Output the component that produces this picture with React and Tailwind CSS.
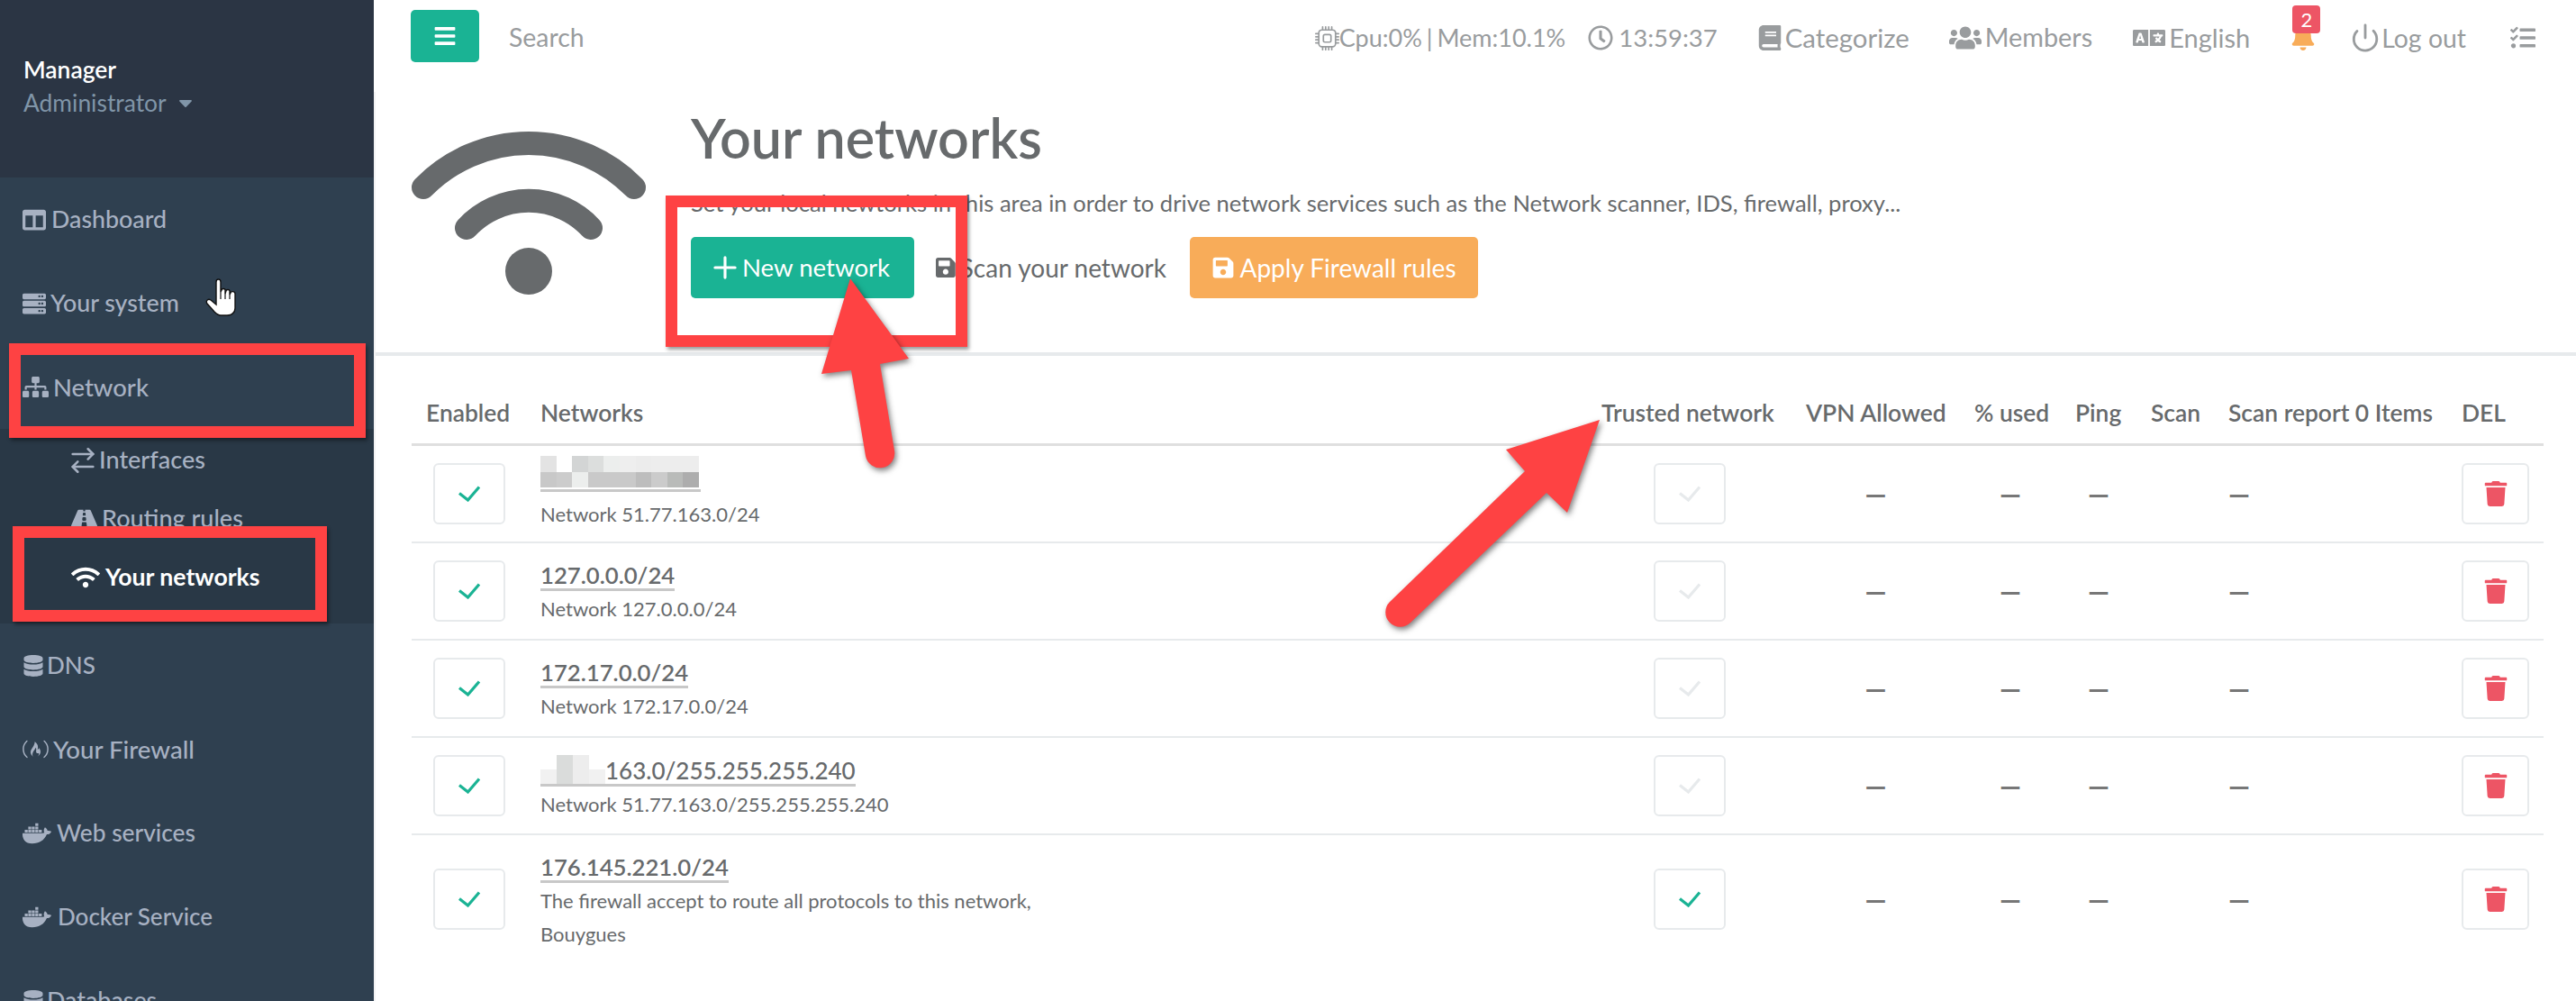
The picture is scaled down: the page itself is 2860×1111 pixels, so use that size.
import React from "react";
import { FaBars, FaBell, FaBook, FaCaretDown, FaColumns, FaDatabase, FaDocker, FaFreeCodeCamp, FaLanguage, FaRegClock, FaRoad, FaSave, FaServer, FaSitemap, FaTasks, FaTrash, FaUsers, FaWifi } from "react-icons/fa";
import { BsCpu } from "react-icons/bs";
import { ArrowRightLeft, Plus, Power } from "lucide-react";

const topItems = [
  { icon: <FaRegClock className="text-[28px]" />, label: "13:59:37", cls: "ml-[25px] gap-[6px] text-[27.5px]" },
  { icon: <FaBook className="text-[28px]" />, label: "Categorize", cls: "ml-[44px] gap-[3px] text-[29.4px]" },
  { icon: <FaUsers className="text-[36px]" />, label: "Members", cls: "ml-[44px] gap-[4px] text-[28.8px]" },
  { icon: <FaLanguage className="text-[36px]" />, label: "English", cls: "ml-[45px] gap-[4px] text-[29px]" },
];

const networks = [
  { name: "blur1", desc: ["Network 51.77.163.0/24"], h: "h-[108px]" },
  { name: "127.0.0.0/24", desc: ["Network 127.0.0.0/24"], h: "h-[108px]" },
  { name: "172.17.0.0/24", desc: ["Network 172.17.0.0/24"], h: "h-[108px]" },
  { name: "blur2", desc: ["Network 51.77.163.0/255.255.255.240"], h: "h-[108px]" },
  { name: "176.145.221.0/24", desc: ["The firewall accept to route all protocols to this network,", "Bouygues"], h: "h-[142px]", trusted: true, last: true },
];

const blurTop = ["bg-[#e3e3e3]", "bg-white", "bg-[#d3d5d5]", "bg-[#dcdedd]", "bg-[#eceeed]", "bg-[#eeeeee]", "bg-[#ececec]", "bg-[#ededed]", "bg-[#ededed]", "bg-[#ededed]"];
const blurBottom = ["bg-[#c8c8c8]", "bg-[#cccccc]", "bg-[#eceeed]", "bg-[#c9c9c9]", "bg-[#c9c9c9]", "bg-[#c9c9c9]", "bg-[#bdbdbd]", "bg-[#cbcbcb]", "bg-[#b9bbb9]", "bg-[#adadad]"];

function NavItem({ icon, label, textCls }) {
  return (
    <div className="h-[93px] flex items-center pl-[25px] text-[26.8px] text-[#a7b1c2] font-medium">
      {icon}
      <span className={textCls}>{label}</span>
    </div>
  );
}

function SubItem({ icon, label, textCls, active }) {
  return (
    <div className={`h-[65px] flex items-center pl-[79px] text-[27px] font-medium ${active ? "text-white" : "text-[#a7b1c2]"}`}>
      {icon}
      <span className={textCls}>{label}</span>
    </div>
  );
}

function Sidebar() {
  return (
    <aside className="w-[415px] h-[1111px] shrink-0 bg-[#2f4050] overflow-hidden">
      <div className="h-[197px] bg-[#2b3544] pl-[26px] pt-[58px]">
        <div className="text-[26.4px] leading-[38px] font-semibold text-white">Manager</div>
        <div className="text-[26.4px] leading-[36px] text-[#8095a8] flex items-center">
          Administrator
          <FaCaretDown className="ml-[9px] text-[24px]" />
        </div>
      </div>
      <NavItem icon={<FaColumns className="text-[26px]" />} label="Dashboard" textCls="ml-[6px]" />
      <NavItem icon={<FaServer className="text-[26px]" />} label="Your system" textCls="ml-[5px]" />
      <NavItem icon={<FaSitemap className="text-[29px]" />} label="Network" textCls="ml-[5px] text-[27.4px]" />
      <div className="bg-[#293846] h-[216px] pt-[2px]">
        <SubItem icon={<ArrowRightLeft className="w-[34px] h-[34px] -mx-[4px]" strokeWidth={1.8} />} label="Interfaces" textCls="ml-[5px]" />
        <SubItem icon={<FaRoad className="text-[29px]" />} label="Routing rules" textCls="ml-[5px]" />
        <SubItem icon={<FaWifi className="text-[32px]" />} label="Your networks" textCls="ml-[6px] font-bold text-[26.6px]" active />
      </div>
      <NavItem icon={<FaDatabase className="text-[24px]" />} label="DNS" textCls="ml-[3px] text-[26px]" />
      <NavItem icon={<FaFreeCodeCamp className="text-[29px]" />} label="Your Firewall" textCls="ml-[5px] text-[27.6px]" />
      <NavItem icon={<FaDocker className="text-[32px]" />} label="Web services" textCls="ml-[6px] text-[26.3px]" />
      <NavItem icon={<FaDocker className="text-[32px]" />} label="Docker Service" textCls="ml-[7px] text-[26px]" />
      <NavItem icon={<FaDatabase className="text-[24px]" />} label="Databases" textCls="ml-[3px]" />
    </aside>
  );
}

function TopBar() {
  return (
    <header className="h-[102px] flex items-start">
      <button className="ml-[41px] mt-[11px] w-[76px] h-[58px] rounded-[5px] bg-[#1ab394] text-white flex items-center justify-center">
        <FaBars className="text-[26px]" />
      </button>
      <span className="ml-[33px] mt-[21px] text-[28.4px] leading-[40px] text-[#999c9e]">Search</span>
      <div className="ml-auto pr-[45px] h-[84px] flex items-center text-[28.4px] text-[#999c9e]">
        <BsCpu className="text-[27px]" />
        <span className="text-[27px] [word-spacing:-2px]">Cpu:0% | Mem:10.1%</span>
        {topItems.map((item) => (
          <div key={item.label} className={`flex items-center ${item.cls}`}>
            {item.icon}
            <span>{item.label}</span>
          </div>
        ))}
        <div className="relative ml-[45px] text-[#f8ac59]">
          <FaBell className="text-[28px]" />
          <span className="absolute left-[2px] top-[-22px] w-[31px] h-[31px] rounded-[4px] bg-[#ed5565] text-white text-[22px] leading-[31px] text-center">2</span>
        </div>
        <div className="ml-[38px] flex items-center gap-[1px]">
          <Power className="w-[34px] h-[34px]" strokeWidth={2} />
          <span>Log out</span>
        </div>
        <FaTasks className="ml-[49px] text-[28px]" />
      </div>
    </header>
  );
}

function Hero() {
  return (
    <section className="h-[293px] border-b-4 border-[#e7eaec] flex items-start">
      <svg viewBox="0 0 260 182" className="w-[260px] h-[182px] ml-[40px] mt-[43px] text-[#676a6c]">
        <path d="M13 63 A164 164 0 0 1 247 63" fill="none" stroke="currentColor" strokeWidth="26" strokeLinecap="round" />
        <path d="M61 108 A94 94 0 0 1 199 108" fill="none" stroke="currentColor" strokeWidth="26" strokeLinecap="round" />
        <circle cx="130" cy="156" r="26" fill="currentColor" />
      </svg>
      <div className="ml-[50px] text-[#676a6c]">
        <h1 className="mt-[21px] text-[61px] leading-[60px] font-semibold">Your networks</h1>
        <p className="mt-[24px] text-[25.6px] leading-[36px]">Set your local newtorks in this area in order to drive network services such as the Network scanner, IDS, firewall, proxy...</p>
        <div className="mt-[20px] flex items-center text-[28px]">
          <button className="w-[248px] h-[68px] rounded-[5px] bg-[#1ab394] text-white text-[27.6px] flex items-center justify-center gap-[8px]">
            <Plus className="w-[38px] h-[38px] -mx-[8px]" strokeWidth={2} />
            New network
          </button>
          <button className="ml-[24px] w-[256px] flex items-center gap-[5px] whitespace-nowrap">
            <FaSave className="text-[26px]" />
            Scan your network
          </button>
          <button className="ml-[26px] w-[320px] h-[68px] rounded-[5px] bg-[#f8ac59] text-white flex items-center justify-center gap-[5px]">
            <FaSave className="text-[26px]" />
            Apply Firewall rules
          </button>
        </div>
      </div>
    </section>
  );
}

function CheckBox({ on }) {
  return (
    <div className="w-[80px] h-[68px] border-2 border-[#e7eaec] rounded-[6px] flex items-center justify-center">
      <svg viewBox="0 0 26 18" className={`w-[26px] h-[18px] ${on ? "text-[#1ab394]" : "text-[#e7eaec]"}`}>
        <path d="M2 8.5 L11.5 16 L24 1.5" fill="none" stroke="currentColor" strokeWidth="3.2" />
      </svg>
    </div>
  );
}

function NetworkName({ name }) {
  if (name === "blur1") {
    return (
      <div className="w-[178px] -mt-[7px] mb-[6px] border-b-[3px] border-[#c8c8c8] pb-[2px]">
        <div className="flex h-[18px]">{blurTop.map((c, i) => <i key={i} className={`w-[17.6px] ${c}`} />)}</div>
        <div className="flex h-[17px]">{blurBottom.map((c, i) => <i key={i} className={`w-[17.6px] ${c}`} />)}</div>
      </div>
    );
  }
  if (name === "blur2") {
    return (
      <div className="w-fit flex items-end border-b-[3px] border-[#c8c8c8] text-[26px] leading-[30px] font-medium">
        <div className="flex items-end w-[72px]">
          <i className="w-[18px] h-[16px] bg-[#f1f1f1]" />
          <i className="w-[18px] h-[32px] bg-[#dadcdb]" />
          <i className="w-[18px] h-[32px] bg-[#ededed]" />
          <i className="w-[18px] h-[16px] bg-[#f1f1f1]" />
        </div>
        <span>163.0/255.255.255.240</span>
      </div>
    );
  }
  return <div className="w-fit border-b-[3px] border-[#c8c8c8] text-[25.7px] leading-[30px] font-semibold">{name}</div>;
}

function NetworkTable() {
  const dash = <span className="font-black text-[#777] text-[30px]">—</span>;
  return (
    <table className="ml-[40px] mt-[33px] w-[2367px] table-fixed border-separate border-spacing-0 text-[#676a6c]">
      <colgroup>
        <col className="w-[128px]" />
        <col className="w-[1177px]" />
        <col className="w-[227px]" />
        <col className="w-[187px]" />
        <col className="w-[112px]" />
        <col className="w-[84px]" />
        <col className="w-[86px]" />
        <col className="w-[259px]" />
        <col className="w-[107px]" />
      </colgroup>
      <thead>
        <tr className="text-[26.4px] text-left">
          {["Enabled", "Networks", "Trusted network", "VPN Allowed", "% used", "Ping", "Scan", "Scan report 0 Items", "DEL"].map((h) => (
            <th key={h} className={`h-[67px] pb-[3px] font-semibold whitespace-nowrap border-b-[3px] border-[#dfdfdf] ${h === "Networks" ? "pl-[15px] pr-[16px]" : "px-[16px]"}`}>{h}</th>
          ))}
        </tr>
      </thead>
      <tbody>
        {networks.map((n) => {
          const cell = `${n.last ? "" : "border-b-2 border-[#e7eaec]"} px-[16px]`;
          return (
            <tr key={n.name} className={n.h}>
              <td className={`${cell} px-[24px]`}><CheckBox on /></td>
              <td className={`${cell} pl-[15px] pt-[5px]`}>
                <NetworkName name={n.name} />
                <div className="mt-[1px] text-[22px] leading-[37px]">
                  {n.desc.map((line) => <div key={line}>{line}</div>)}
                </div>
              </td>
              <td className={cell}><div className="flex justify-center"><CheckBox on={n.trusted} /></div></td>
              <td className={`${cell} text-center`}>{dash}</td>
              <td className={`${cell} text-center`}>{dash}</td>
              <td className={`${cell} text-center`}>{dash}</td>
              <td className={cell}></td>
              <td className={cell}>{dash}</td>
              <td className={cell}>
                <div className="w-[75px] h-[68px] border-2 border-[#e7eaec] rounded-[6px] flex items-center justify-center text-[#ed5565]">
                  <FaTrash className="text-[28px]" />
                </div>
              </td>
            </tr>
          );
        })}
      </tbody>
    </table>
  );
}

// red annotations and mouse pointer drawn on top of the screenshot
function Annotations() {
  return (
    <>
      <div className="absolute left-[10px] top-[381px] w-[396px] h-[105px] border-[13px] border-[#fe4243] shadow-[2px_3px_4px_rgba(0,0,0,0.4)]" />
      <div className="absolute left-[14px] top-[584px] w-[349px] h-[106px] border-[13px] border-[#fe4243] shadow-[2px_3px_4px_rgba(0,0,0,0.4)]" />
      <div className="absolute left-[739px] top-[217px] w-[335px] h-[168px] border-[13px] border-[#fe4243] shadow-[2px_3px_4px_rgba(0,0,0,0.4)]" />
      <svg viewBox="0 0 2860 1111" className="absolute left-0 top-0 w-[2860px] h-[1111px] pointer-events-none drop-shadow-[2px_3px_3px_rgba(0,0,0,0.5)]">
        <path fill="#fe4243" d="M944 309 L1009 398 L977 404 L993 500 A16 16 0 0 1 961 506 L945 411 L912 415 Z" />
        <path fill="#fe4243" d="M1776 466 L1672 499 L1693 523 L1543 668 A16 16 0 0 0 1566 691 L1717 547 L1740 569 Z" />
      </svg>
      <svg viewBox="0 0 36 44" className="absolute left-[228px] top-[308px] w-[36px] h-[44px]">
        <path fill="#fff" stroke="#111" strokeWidth="1.4" d="M12 5 C12 1 17 1 17 5 L17 16 L18 14 C18 12 22 12 22 14 L22 18 L23 15 C23 13 27 13 27 15 L27 19 L28 17 C28 15 33 15 33 18 L33 34 C33 39 29 42 24 42 L17 42 C14 42 12 40 10 38 L2 29 C0 26 3 23 6 25 L12 30 Z" />
        <path stroke="#111" strokeWidth="1.2" d="M17 16 L17 24 M22 18 L22 24 M27 19 L27 24" />
      </svg>
    </>
  );
}

export default function App() {
  return (
    <div className="relative w-[2860px] h-[1111px] overflow-hidden bg-white font-['Lato',sans-serif] flex">
      <Sidebar />
      <main className="flex-1 min-w-0">
        <TopBar />
        <div className="border-l-2 border-[#f3f3f4] h-[1009px]">
          <Hero />
          <NetworkTable />
        </div>
      </main>
      <Annotations />
    </div>
  );
}
